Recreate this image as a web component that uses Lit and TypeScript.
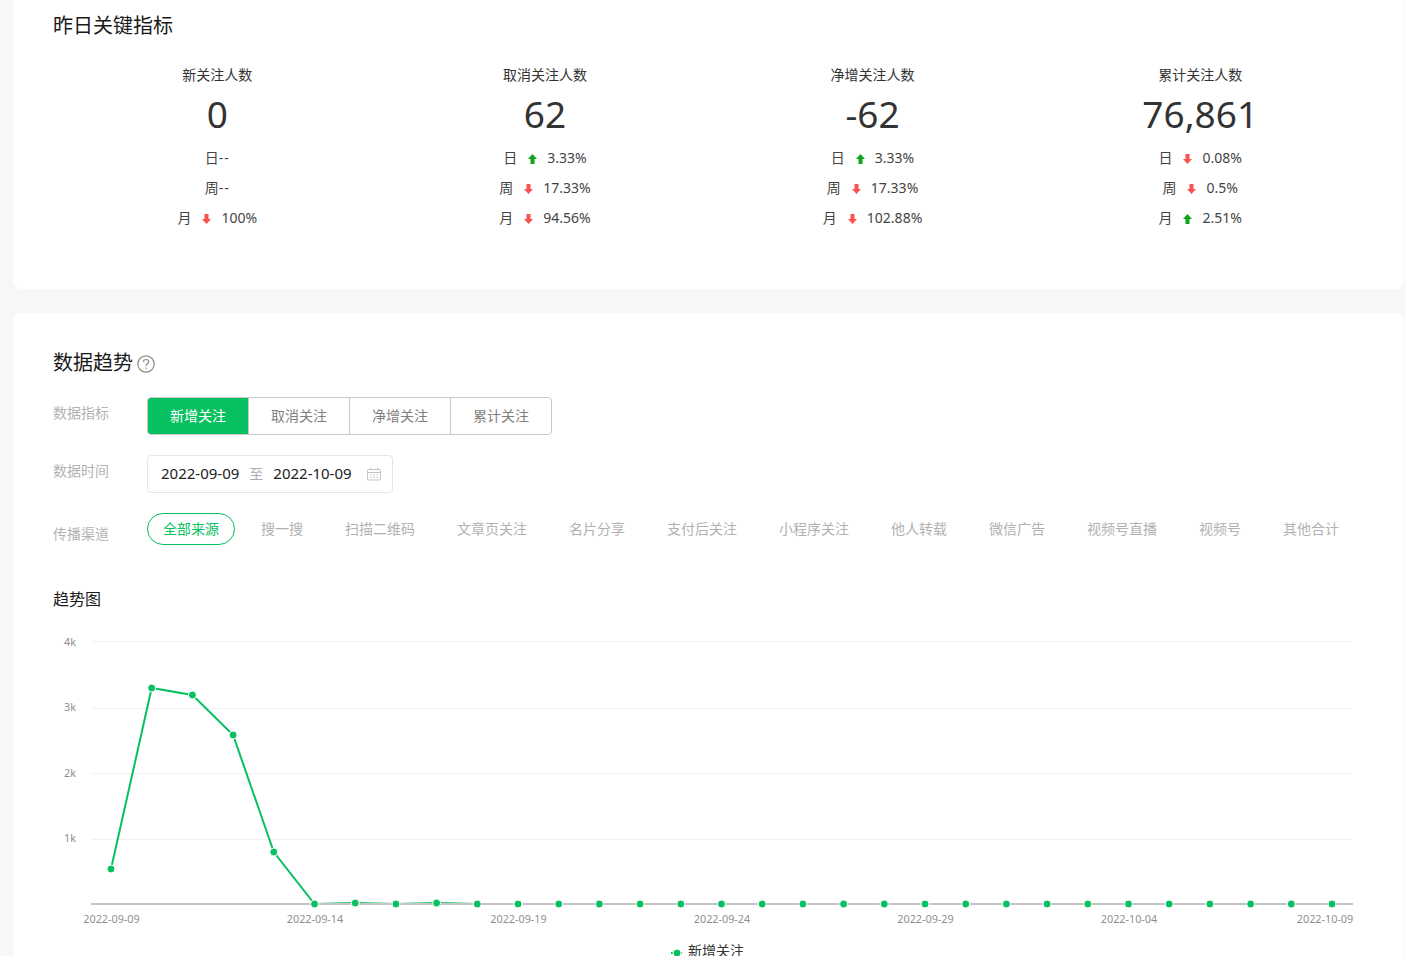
import { LitElement, html, css, svg } from "lit";
import { customElement } from "lit/decorators.js";

type Delta = { label: string; dir?: "up" | "down"; pct?: string };
type Stat = { title: string; value: string; rows: Delta[] };

const STATS: Stat[] = [
  { title: "新关注人数", value: "0", rows: [{ label: "日" }, { label: "周" }, { label: "月", dir: "down", pct: "100%" }] },
  { title: "取消关注人数", value: "62", rows: [
    { label: "日", dir: "up", pct: "3.33%" }, { label: "周", dir: "down", pct: "17.33%" }, { label: "月", dir: "down", pct: "94.56%" } ] },
  { title: "净增关注人数", value: "-62", rows: [
    { label: "日", dir: "up", pct: "3.33%" }, { label: "周", dir: "down", pct: "17.33%" }, { label: "月", dir: "down", pct: "102.88%" } ] },
  { title: "累计关注人数", value: "76,861", rows: [
    { label: "日", dir: "down", pct: "0.08%" }, { label: "周", dir: "down", pct: "0.5%" }, { label: "月", dir: "up", pct: "2.51%" } ] },
];
const METRICS = ["新增关注", "取消关注", "净增关注", "累计关注"];
const CHANNELS = ["全部来源", "搜一搜", "扫描二维码", "文章页关注", "名片分享", "支付后关注", "小程序关注", "他人转载", "微信广告", "视频号直播", "视频号", "其他合计"];

// Chart values are page-relative; the svg starts at page (53, 611).
const OX = 53, OY = 611;
const YS = [869, 688, 695, 735, 852, 904, 903, 904, 903, 904, 904, 904, 904, 904, 904, 904, 904, 904, 904, 904, 904, 904, 904, 904, 904, 904, 904, 904, 904, 904, 904];
const PTS = YS.map((y, i) => [111 + (i * 1221) / 30 - OX, y - OY]);
const GRID = [[641, 642, "4k"], [708, 707, "3k"], [773, 773, "2k"], [839, 838, "1k"]] as [number, number, string][];
const XLABELS = [["2022-09-09", 111.5], ["2022-09-14", 315], ["2022-09-19", 518.5], ["2022-09-24", 722], ["2022-09-29", 925.5], ["2022-10-04", 1129], ["2022-10-09", 1325]] as [string, number][];

@customElement("app-root")
export class AppRoot extends LitElement {
  static styles = css`
    :host { display: block; height: 956px; overflow: hidden; background: #f6f7f9;
      font-family: "Noto Sans", "Noto Sans CJK SC", sans-serif; color: #333; }
    .page { padding-left: 13px; padding-right: 1px; display: flex; flex-direction: column; gap: 24px; }
    .card { background: #fff; padding-left: 40px; padding-right: 40px; }
    .card-top { height: 289px; border-radius: 0 0 8px 8px; box-sizing: border-box; }
    .card-main { border-radius: 8px 8px 0 0; padding-top: 35px; height: 700px; box-sizing: border-box; }
    .h1 { font-size: 20px; line-height: 52px; color: #1a1a1a; font-weight: 400; margin: 0; }
    .stats { display: grid; grid-template-columns: repeat(4, 1fr); margin-top: 13px; margin-left: 0.5px; }
    .stat { display: flex; flex-direction: column; align-items: center; }
    .stat-title { font-size: 14px; line-height: 20px; color: #333; }
    .stat-value { font-size: 37px; line-height: 50px; margin-top: 4px; margin-bottom: 4px; color: #333; }
    .row { font-size: 14px; line-height: 30px; height: 30px; display: flex; align-items: center; color: #444; }
    .dash { letter-spacing: 1px; }
    .arrow { width: 9px; height: 10px; margin: 2px 10px 0 11px; display: block; }
    .title2 { display: flex; align-items: flex-start; gap: 4px; height: 28px; }
    .title2 .t { font-size: 20px; line-height: 30px; color: #1a1a1a; }
    .help { width: 18px; height: 18px; display: block; margin-top: 7px; }
    .form-row { display: flex; align-items: flex-start; margin-top: 20px; }
    .form-row.first { margin-top: 21px; }
    .lab { width: 94px; flex: none; font-size: 14px; line-height: 20px; color: #b2b2b2; padding-top: 6px; }
    .lab.low { padding-top: 11px; }
    .seg { display: flex; height: 38px; border: 1px solid #c9c9c9; border-radius: 4px; box-sizing: border-box; width: 405px; overflow: hidden; }
    .seg div { flex: 1; font-size: 14px; line-height: 36px; text-align: center; color: #7f7f7f; border-left: 1px solid #c9c9c9; }
    .seg div.on { flex: none; width: 101px; box-sizing: border-box; padding-left: 1px; background: #07c160; color: #fff;
      margin: -1px 0 -1px -1px; line-height: 38px; border-left: none; }
    .date { width: 246px; height: 38px; box-sizing: border-box; border: 1px solid #e5e5e5; border-radius: 4px;
      display: flex; align-items: center; padding-left: 13px; padding-bottom: 2px; font-size: 15px; color: #222; }
    .date .to { font-size: 14px; color: #aaa; margin: 0 10px 0 10px; }
    .cal { width: 16px; height: 14px; margin-left: 14px; display: block; margin-top: 1px; }
    .tabs { display: flex; gap: 10px; }
    .tab { font-size: 14px; line-height: 32px; height: 32px; padding: 0 16px; color: #b2b2b2; box-sizing: border-box; white-space: nowrap; }
    .tab.on { border: 1px solid #07c160; border-radius: 16px; color: #07c160; padding: 0 15px; line-height: 30px; }
    .h3 { font-size: 16px; line-height: 24px; margin-top: 42px; color: #1a1a1a; font-weight: 400; }
    .chart { display: block; overflow: visible; }
    .axis { font-size: 10.8px; fill: #8f8f8f; }
    .legend { font-size: 14px; fill: #333; }
  `;

  private arrow(dir: "up" | "down") {
    const d = dir === "up" ? "M4.5 0 L9 5 H6.5 V10 H2.5 V5 H0 Z" : "M2.5 0 H6.5 V5 H9 L4.5 10 L0 5 H2.5 Z";
    const c = dir === "up" ? "#10a31c" : "#fa5151";
    return html`<svg class="arrow" viewBox="0 0 9 10"><path d=${d} fill=${c}></path></svg>`;
  }

  private chart() {
    const poly = PTS.map((p) => p.join(",")).join(" ");
    return html`<svg class="chart" width="1311" height="345" viewBox="0 0 1311 345">
      ${GRID.map(([y, ty, t]) => svg`
        <line x1=${91 - OX} x2=${1352 - OX} y1=${y - OY + 0.5} y2=${y - OY + 0.5} stroke="#f2f2f2"></line>
        <text class="axis" x=${76 - OX} y=${ty - OY + 4} text-anchor="end">${t}</text>`)}
      <polyline points=${poly} fill="none" stroke="#07c160" stroke-width="2"></polyline>
      <line x1=${91 - OX} x2=${1353 - OX} y1=${904 - OY} y2=${904 - OY} stroke="#c4c4c4" stroke-width="2"></line>
      ${PTS.map((p) => svg`<circle cx=${p[0]} cy=${p[1]} r="4" fill="#07c160" stroke="#fff" stroke-width="1"></circle>`)}
      ${XLABELS.map(([t, x]) => svg`<text class="axis" x=${x - OX} y=${923 - OY} text-anchor="middle">${t}</text>`)}
      <line x1=${671 - OX} x2=${683 - OX} y1=${953 - OY} y2=${953 - OY} stroke="#07c160" stroke-width="2" stroke-dasharray="2 1"></line>
      <circle cx=${677 - OX} cy=${953 - OY} r="4" fill="#07c160" stroke="#fff"></circle>
      <text class="legend" x=${688 - OX} y=${956 - OY}>新增关注</text>
    </svg>`;
  }

  render() {
    return html`<div class="page">
      <section class="card card-top">
        <h2 class="h1">昨日关键指标</h2>
        <div class="stats">
          ${STATS.map((s) => html`<div class="stat">
            <div class="stat-title">${s.title}</div>
            <div class="stat-value">${s.value}</div>
            ${s.rows.map((r) => html`<div class="row">
              <span>${r.label}</span>
              ${r.dir ? html`${this.arrow(r.dir)}<span>${r.pct}</span>` : html`<span class="dash">--</span>`}
            </div>`)}
          </div>`)}
        </div>
      </section>
      <section class="card card-main">
        <div class="title2">
          <span class="t">数据趋势</span>
          <svg class="help" viewBox="0 0 18 18" fill="none" stroke="#8c8c8c" stroke-width="1.2">
            <circle cx="9" cy="9" r="8.2"></circle>
            <path d="M6.3 7.1 C6.3 5.4 7.5 4.5 9 4.5 C10.5 4.5 11.7 5.5 11.7 6.8 C11.7 8.7 9 8.8 9 11.1"></path>
            <circle cx="9" cy="13.2" r="0.8" fill="#8c8c8c" stroke="none"></circle>
          </svg>
        </div>
        <div class="form-row first">
          <div class="lab">数据指标</div>
          <div class="seg">${METRICS.map((m, i) => html`<div class=${i === 0 ? "on" : ""}>${m}</div>`)}</div>
        </div>
        <div class="form-row">
          <div class="lab">数据时间</div>
          <div class="date">
            <span>2022-09-09</span><span class="to">至</span><span>2022-10-09</span>
            <svg class="cal" viewBox="0 0 16 14" fill="none" stroke="#c4c4c4">
              <rect x="1.5" y="2.5" width="13" height="10.5" rx="1"></rect>
              <path d="M1.5 5.5 H14.5 M4.5 0.8 V3 M11.5 0.8 V3"></path>
              <path d="M4 8 H5.5 M7.2 8 H8.8 M10.5 8 H12 M4 10.5 H5.5 M7.2 10.5 H8.8 M10.5 10.5 H12"></path>
            </svg>
          </div>
        </div>
        <div class="form-row">
          <div class="lab low">传播渠道</div>
          <div class="tabs">${CHANNELS.map((c, i) => html`<div class="tab ${i === 0 ? "on" : ""}">${c}</div>`)}</div>
        </div>
        <div class="h3">趋势图</div>
        ${this.chart()}
      </section>
    </div>`;
  }
}
